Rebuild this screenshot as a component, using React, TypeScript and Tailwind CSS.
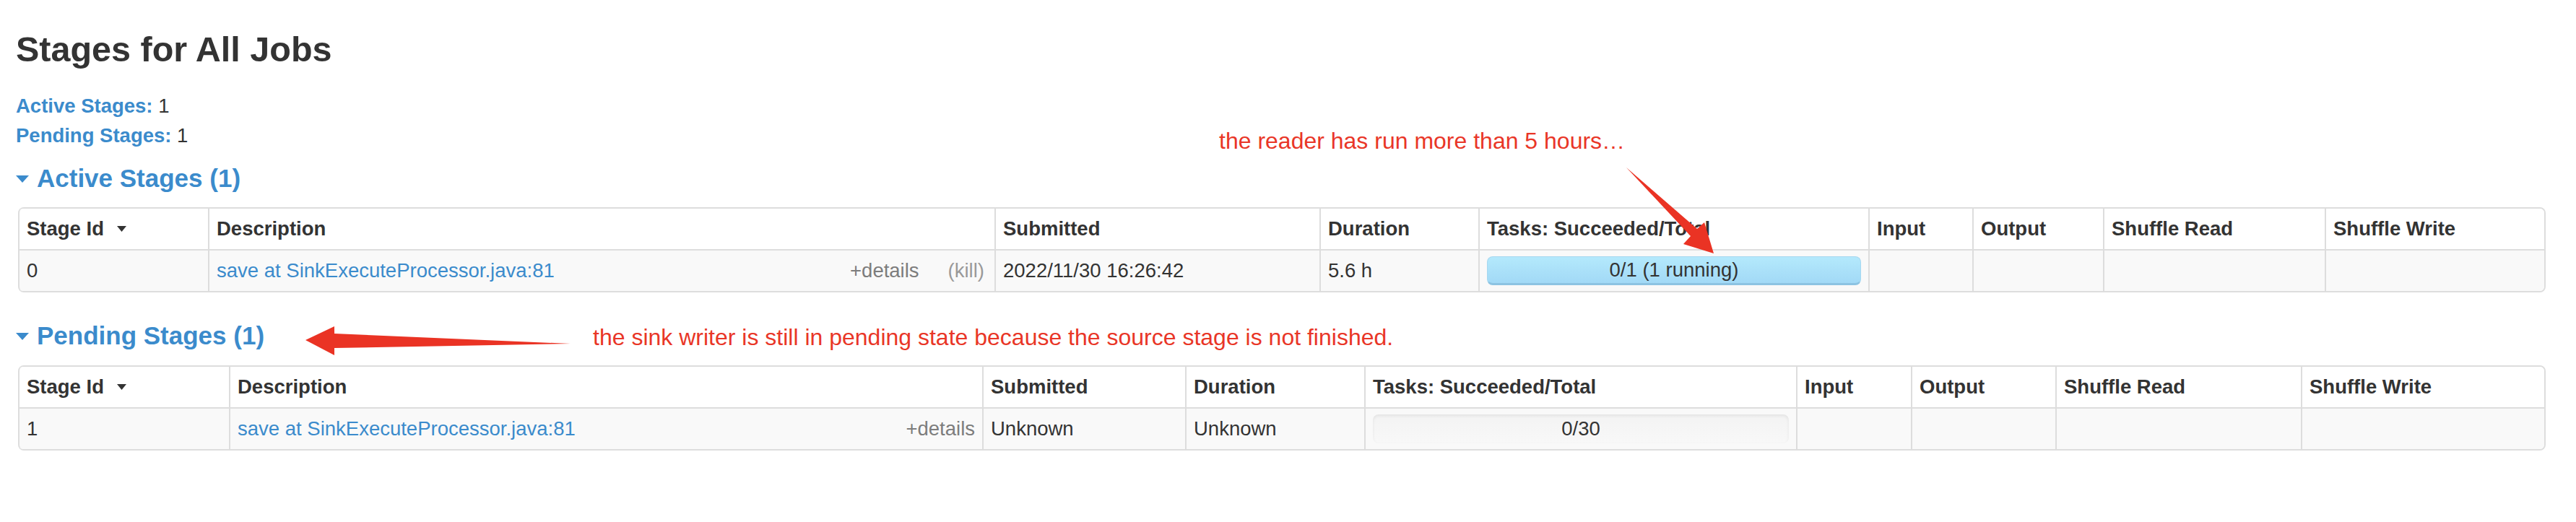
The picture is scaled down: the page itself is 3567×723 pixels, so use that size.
import type { ReactNode } from "react";

const HEADERS = [
  "Stage Id",
  "Description",
  "Submitted",
  "Duration",
  "Tasks: Succeeded/Total",
  "Input",
  "Output",
  "Shuffle Read",
  "Shuffle Write",
];

interface StageRow {
  id: string;
  desc: string;
  killable: boolean;
  submitted: string;
  duration: string;
  tasks: string;
  running: boolean;
}

function OpenArrow() {
  return (
    <svg width={18} height={10} viewBox="0 0 18 10" className="mr-[11px] mb-[3px] inline-block">
      <polygon points="0,0 18,0 9,10" fill="#3b8bcc" />
    </svg>
  );
}

function SortArrow() {
  return (
    <svg width={13} height={8} viewBox="0 0 13 8" className="ml-[18px] mb-[4px] inline-block">
      <polygon points="0,0 13,0 6.5,8" fill="#333" />
    </svg>
  );
}

function SectionTitle({ children }: { children: ReactNode }) {
  return (
    <h4 className="text-[35px] leading-[40px] font-bold text-[#3b8bcc]">
      <OpenArrow />
      {children}
    </h4>
  );
}

function TaskBar({ label, running }: { label: string; running: boolean }) {
  if (running) {
    return (
      <div className="flex h-[40px] items-center justify-center rounded-[8px] border border-[#a6d8f0] border-b-[3px] border-b-[#8cc3e2] bg-linear-to-b from-[#b4e9fc] to-[#a2d9f6] leading-none">
        {label}
      </div>
    );
  }
  return (
    <div className="flex h-[40px] items-center justify-center rounded-[8px] bg-linear-to-b from-[#f3f3f3] to-[#f8f8f8] leading-none shadow-[inset_0_2px_4px_rgba(0,0,0,0.07)]">
      {label}
    </div>
  );
}

function StageTable({ widths, row }: { widths: string[]; row: StageRow }) {
  const last = HEADERS.length - 1;
  return (
    <table className="ml-[3px] w-[3500px] table-fixed border-separate border-spacing-0 rounded-[8px] border-2 border-l-0 border-[#ddd] text-[27.5px] leading-[40px] text-[#333]">
      <thead>
        <tr>
          {HEADERS.map((h, i) => (
            <th
              key={h}
              className={`${widths[i]} border-l-2 border-[#ddd] bg-white px-[10px] py-[8px] text-left font-bold ${
                i === 0 ? "rounded-tl-[6px]" : ""
              } ${i === last ? "rounded-tr-[6px]" : ""}`}
            >
              {h}
              {i === 0 ? <SortArrow /> : null}
            </th>
          ))}
        </tr>
      </thead>
      <tbody>
        <tr className="bg-[#f9f9f9]">
          <td className="rounded-bl-[6px] border-t-2 border-l-2 border-[#ddd] px-[10px] py-[8px]">{row.id}</td>
          <td className="border-t-2 border-l-2 border-[#ddd] px-[10px] py-[8px]">
            <div className="flex items-center">
              <span className="text-[#3b8bcc]">{row.desc}</span>
              <span className="ml-auto text-[#7d7d7d]">+details</span>
              {row.killable ? <span className="mr-[4px] ml-[40px] text-[#999]">(kill)</span> : null}
            </div>
          </td>
          <td className="border-t-2 border-l-2 border-[#ddd] px-[10px] py-[8px]">{row.submitted}</td>
          <td className="border-t-2 border-l-2 border-[#ddd] px-[10px] py-[8px]">{row.duration}</td>
          <td className="border-t-2 border-l-2 border-[#ddd] px-[10px] py-[8px]">
            <TaskBar label={row.tasks} running={row.running} />
          </td>
          <td className="border-t-2 border-l-2 border-[#ddd] px-[10px] py-[8px]" />
          <td className="border-t-2 border-l-2 border-[#ddd] px-[10px] py-[8px]" />
          <td className="border-t-2 border-l-2 border-[#ddd] px-[10px] py-[8px]" />
          <td className="rounded-br-[6px] border-t-2 border-l-2 border-[#ddd] px-[10px] py-[8px]" />
        </tr>
      </tbody>
    </table>
  );
}

const ACTIVE: StageRow = {
  id: "0",
  desc: "save at SinkExecuteProcessor.java:81",
  killable: true,
  submitted: "2022/11/30 16:26:42",
  duration: "5.6 h",
  tasks: "0/1 (1 running)",
  running: true,
};

const PENDING: StageRow = {
  id: "1",
  desc: "save at SinkExecuteProcessor.java:81",
  killable: false,
  submitted: "Unknown",
  duration: "Unknown",
  tasks: "0/30",
  running: false,
};

export default function App() {
  return (
    <div className="relative h-[723px] w-[3567px] overflow-hidden bg-white font-['Liberation_Sans',Arial,sans-serif] text-[#333]">
      <div className="pl-[22px]">
        <h3 className="mt-[41px] text-[48.5px] leading-[54px] font-bold">Stages for All Jobs</h3>

        <ul className="mt-[31px] text-[27.5px] leading-[41px]">
          <li>
            <strong className="font-bold text-[#3b8bcc]">Active Stages:</strong> 1
          </li>
          <li>
            <strong className="font-bold text-[#3b8bcc]">Pending Stages:</strong> 1
          </li>
        </ul>

        <div className="mt-[19px]">
          <SectionTitle>Active Stages (1)</SectionTitle>
        </div>
        <div className="mt-[20px]">
          <StageTable
            widths={["w-[263px]", "w-[1089px]", "w-[450px]", "w-[220px]", "w-[540px]", "w-[144px]", "w-[181px]", "w-[307px]", ""]}
            row={ACTIVE}
          />
        </div>

        <div className="mt-[40px]">
          <SectionTitle>Pending Stages (1)</SectionTitle>
        </div>
        <div className="mt-[21px]">
          <StageTable
            widths={["w-[292px]", "w-[1043px]", "w-[281px]", "w-[248px]", "w-[598px]", "w-[159px]", "w-[200px]", "w-[340px]", ""]}
            row={PENDING}
          />
        </div>
      </div>

      {/* annotations drawn over the page */}
      <div className="absolute top-[179px] left-[1688px] text-[32px] leading-[32px] whitespace-nowrap text-[#e93627]">
        the reader has run more than 5 hours…
      </div>
      <div className="absolute top-[451px] left-[821px] text-[32px] leading-[32px] whitespace-nowrap text-[#e93627]">
        the sink writer is still in pending state because the source stage is not finished.
      </div>
      <svg className="pointer-events-none absolute top-0 left-0" width={3567} height={723}>
        <polygon points="2252,232 2350,317 2360,308 2373,351 2331,338 2341,327" fill="#ea3324" />
        <polygon points="423,471 463,452 463,462 790,476 463,482 463,492" fill="#ea3324" />
      </svg>
    </div>
  );
}
